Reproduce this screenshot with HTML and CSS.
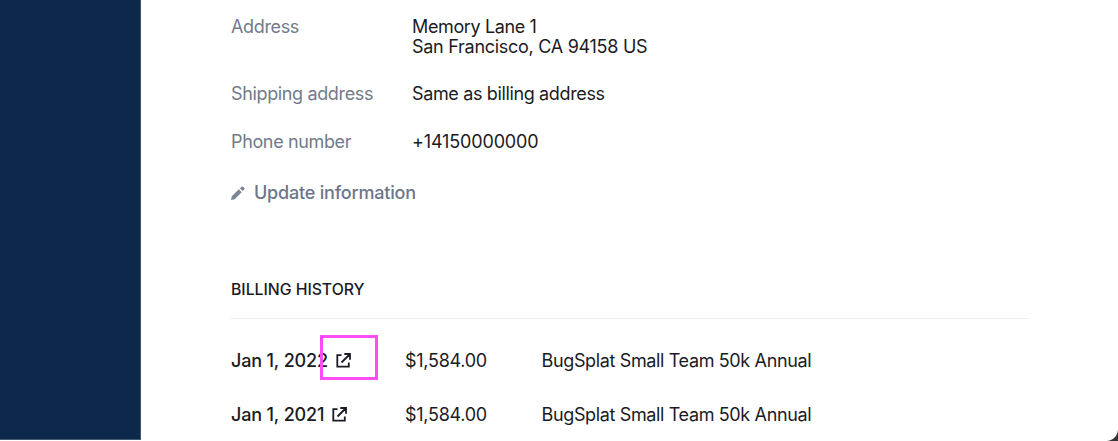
FILE: index.html
```html
<!DOCTYPE html>
<html lang="en">
<head>
<meta charset="utf-8">
<title>Billing</title>
<link rel="stylesheet" href="styles.css">
</head>
<body>
<div class="page">
  <aside class="sidebar"></aside>
  <main class="content">
    <dl class="details">
      <dt>Address</dt><dd class="address"><span class="street">Memory Lane 1</span><br>San Francisco, CA 94158 US</dd>
      <dt>Shipping address</dt><dd>Same as billing address</dd>
      <dt>Phone number</dt><dd class="phone">+14150000000</dd>
    </dl>
    <a class="update"><svg class="pencil" viewBox="0 0 14 14"><path d="M0 14L.8 10.300 7.800 3.300l2.900 2.900L3.700 13.200zM8.900 2.200L10.600.7q.8-.6 1.500 0l1.200 1.200q.6.700 0 1.500l-1.500 1.700z"/></svg><span>Update information</span></a>
    <h2 class="heading">BILLING HISTORY</h2>
    <div class="history">
      <div class="row"><span class="date">Jan 1, 2022<svg class="ext" viewBox="0 0 15 15"><path d="M5.500 2.200H1.300v11.500h11.500V9.500M8.300 1H14v5.700M13.500 1.500L5.500 9.500"/></svg><i class="mark"></i></span><span class="amount">$1,584.00</span><span class="plan">BugSplat Small Team 50k Annual</span></div>
      <div class="row"><span class="date">Jan 1, 2021<svg class="ext" viewBox="0 0 15 15"><path d="M5.500 2.200H1.300v11.500h11.500V9.500M8.300 1H14v5.700M13.500 1.500L5.500 9.500"/></svg></span><span class="amount">$1,584.00</span><span class="plan">BugSplat Small Team 50k Annual</span></div>
    </div>
  </main>
  <i class="corner"></i>
</div>
</body>
</html>
```
FILE: styles.css
```css
* { box-sizing: border-box; }
body { margin: 0; font: 18px/20px Inter, sans-serif; letter-spacing: -.36px; color: #1a1b25; background: #fff; }
.page { position: relative; display: flex; height: 441px; overflow: hidden; }
.sidebar { width: 141px; height: 440px; flex: none; background: #0d284b; border-right: 1px solid #40566f; border-bottom: 1px solid #40566f; }
.content { padding: 17px 0 0 90px; width: 887px; }
.details { display: grid; grid-template-columns: 181px 1fr; grid-template-rows: 40px 21px 20px; row-gap: 27px; margin: 0; }
dt { color: #727b8a; }
dd { margin: 0; }
.address { letter-spacing: -.28px; }
.street { letter-spacing: -.38px; }
.phone { letter-spacing: -.15px; }
.update { display: flex; align-items: center; gap: 9px; margin-top: 31px; color: #6c7688; font-weight: 500; letter-spacing: -.2px; }
.pencil { width: 14px; height: 14px; fill: #7b8495; }
.heading { margin: 77px 0 0; padding-bottom: 18px; border-bottom: 1px solid #ebecf0; font-size: 15.8px; line-height: 20px; font-weight: 500; letter-spacing: -.02px; }
.history { padding-top: 32px; }
.row { display: grid; grid-template-columns: 174px 136.5px 1fr; height: 54px; }
.date { position: relative; font-weight: 550; letter-spacing: -.16px; }
.amount { letter-spacing: -.27px; }
.ext { width: 15px; height: 15px; margin-left: 8px; fill: none; stroke: #1a1b25; stroke-width: 1.8; vertical-align: -1px; }
.mark { position: absolute; left: 89px; top: -16px; width: 58px; height: 45px; border: 3px solid #ff4df5; }
.corner { position: absolute; right: 0; bottom: 0; width: 12px; height: 12px; background: radial-gradient(circle at 0 0, transparent 11.5px, #333 12.5px); }
```
